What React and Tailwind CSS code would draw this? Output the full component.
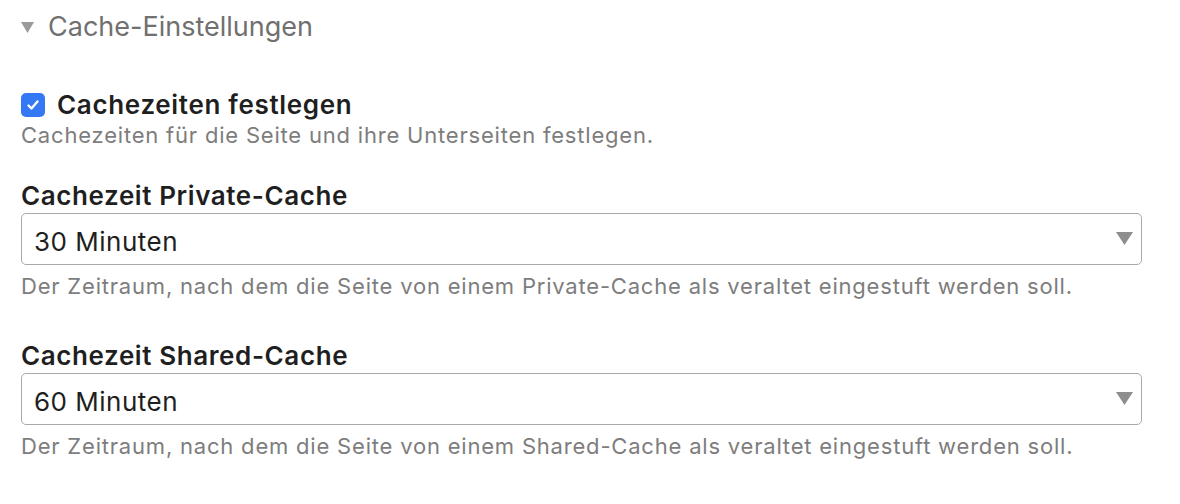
import { useState } from "react";

const OPTIONS = ["15 Minuten", "30 Minuten", "60 Minuten", "2 Stunden", "1 Tag"];

function SelectField({ label, value, onChange, help, className }) {
  return (
    <div className={"flex flex-col " + className}>
      <label className="text-[26px] font-semibold leading-[30px] tracking-[0.6px] text-[#1f1f1f]">{label}</label>
      <div className="relative mt-[2px] h-[52px] w-[1121px]">
        <select
          value={value}
          onChange={(e) => onChange(e.target.value)}
          className="h-full w-full appearance-none rounded-[5px] border border-[#a9a9a9] bg-white pl-[12px] pt-[4px] text-[26px] tracking-[0.5px] text-[#1f1f1f] outline-none"
        >
          {OPTIONS.map((o) => (
            <option key={o}>{o}</option>
          ))}
        </select>
        <svg
          className="pointer-events-none absolute right-[9px] top-[19px]"
          width="17"
          height="13"
          viewBox="0 0 17 13"
        >
          <path d="M0 0h17L8.5 13z" fill="#8e8e8e" />
        </svg>
      </div>
      <p className="mt-[7px] text-[22px] leading-[28px] tracking-[0.8px] text-[#7d7d7d]">{help}</p>
    </div>
  );
}

export default function App() {
  const [open, setOpen] = useState(true);
  const [enabled, setEnabled] = useState(true);
  const [privateCache, setPrivateCache] = useState("30 Minuten");
  const [sharedCache, setSharedCache] = useState("60 Minuten");

  return (
    <div className="min-h-screen bg-white pl-[21px] pt-[11px] font-['Inter',sans-serif]">
      <button
        type="button"
        onClick={() => setOpen(!open)}
        className="flex items-center gap-[14px] text-[27px] leading-[32px] text-[#707070]"
      >
        <svg width="13" height="11" viewBox="0 0 13 11">
          <path d="M0 0h13L6.5 11z" fill="#9a9a9a" />
        </svg>
        Cache-Einstellungen
      </button>

      {open && (
        <div className="mt-[47px] flex flex-col">
          <label className="flex items-center gap-[12px]">
            <span
              onClick={() => setEnabled(!enabled)}
              className={
                enabled
                  ? "flex h-[24px] w-[24px] items-center justify-center rounded-[5px] bg-[#3478f6]"
                  : "flex h-[24px] w-[24px] items-center justify-center rounded-[5px] border border-[#a9a9a9] bg-white"
              }
            >
              {enabled && (
                <svg width="14" height="14" viewBox="0 0 14 14">
                  <path d="M2.5 7.5l3 3 6-7" fill="none" stroke="white" strokeWidth="2.4" strokeLinecap="round" strokeLinejoin="round" />
                </svg>
              )}
            </span>
            <span className="text-[26px] font-semibold leading-[30px] tracking-[0.67px] text-[#1f1f1f]">
              Cachezeiten festlegen
            </span>
          </label>
          <p className="mt-[1px] text-[22px] leading-[28px] tracking-[0.8px] text-[#7d7d7d]">
            Cachezeiten für die Seite und ihre Unterseiten festlegen.
          </p>

          <SelectField
            className="mt-[32px]"
            label="Cachezeit Private-Cache"
            value={privateCache}
            onChange={setPrivateCache}
            help="Der Zeitraum, nach dem die Seite von einem Private-Cache als veraltet eingestuft werden soll."
          />
          <SelectField
            className="mt-[41px]"
            label="Cachezeit Shared-Cache"
            value={sharedCache}
            onChange={setSharedCache}
            help="Der Zeitraum, nach dem die Seite von einem Shared-Cache als veraltet eingestuft werden soll."
          />
        </div>
      )}
    </div>
  );
}
